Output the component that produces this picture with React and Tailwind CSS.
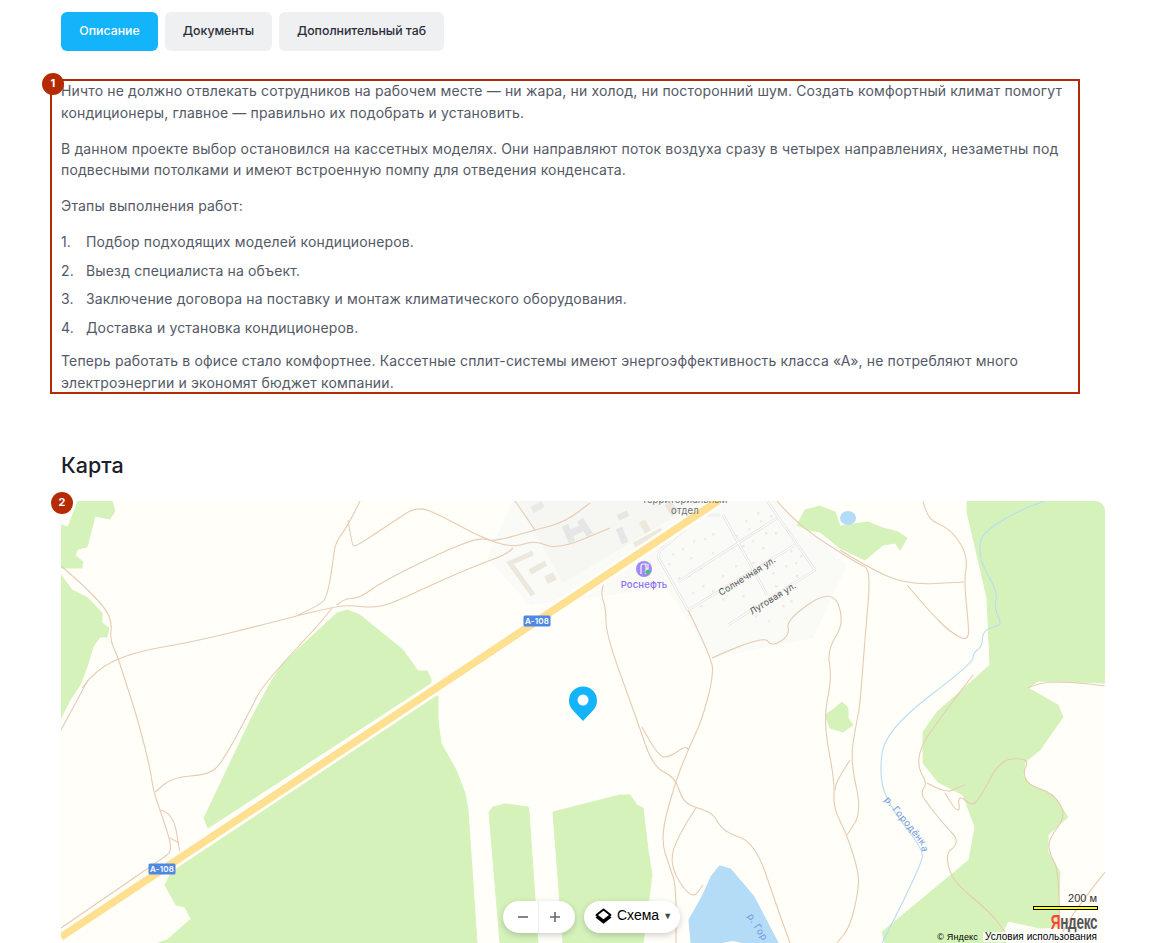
const GREEN = [
  "61,525 68,527 78,501 112,501 115,511 110,519 95,516 87,547 78,549 75,555 83,562 82,568 61,568",
  "61,575 72,590 88,598 102,613 102,623 109,628 107,637 100,637 93,647 87,667 80,685 70,700 61,718",
  "347,610 360,615 403,650 418,671 427,671 431,679 431,683 208,828 204,818 252,717 272,680 283,663 337,613",
  "438,696 427,698 175,865 165,885 176,905 185,907 191,919 167,940 158,943 477,943 468,810 465,793 456,770 441,743 438,720",
  "489,812 493,807 506,804 528,807 529,812 538,943 500,943",
  "553,812 620,795 630,795 637,805 643,808 648,850 652,875 643,943 563,943",
  "967,501 1105,501 1105,683 1038,681 1028,688 1058,705 1063,717 1040,750 1025,762 1023,775 1030,785 1053,795 1068,817 1048,835 1048,852 1060,872 1058,927 1040,928 1008,921 1003,932 1006,943 885,943 882,932 969,860 975,827 963,795 938,782 923,763 923,732 937,712 990,665 987,598 967,512",
  "797,525 805,510 820,506 835,512 840,526 868,522 883,528 898,532 907,538 900,550 895,543 883,545 865,560 840,548 820,532 808,530",
  "825,715 835,708 842,702 848,708 848,718 853,725 843,732 830,728",
];

const TRAILS = [
  "M61,566 L75,578 L90,592 L105,608 L112,622 L110,640 L117,655 L125,680 L137,717 L150,767 L153,790 L160,810 L170,840 L171,852 L163,858 L61,928",
  "M82,688 L95,670 L133,652 L193,642 L270,623 L300,615 L330,608 L347,605 L373,608 L393,603 L440,581 L480,564 L505,555 L513,548",
  "M298,615 L320,605 L327,597 L333,563 L335,543 L347,527 L360,501",
  "M337,605 L343,599 L360,598 L380,583 L440,553 L480,537 L493,542 L535,530 L565,522 L590,503",
  "M348,520 L352,545 L355,547 L393,522 L417,506 L440,515 L480,537 L513,548 L535,540 L557,550 L610,528",
  "M515,501 L535,530",
  "M332,608 L323,620 L283,663 L260,690 L252,707 L222,763 L208,775 L173,777 L155,792",
  "M160,810 L173,812 L180,853",
  "M170,838 L179,843",
  "M61,730 L88,680",
  "M605,580 L600,592 L606,608 L606,635 L637,720 L653,767 L675,777 L683,802 L697,808 L713,813 L723,832 L755,842 L777,907 L790,943",
  "M688,610 L712,658 L713,678 L702,720 L688,750 L676,780 L660,837 L670,868 L676,885 L676,943",
  "M642,727 L658,757 L670,757 L685,746 L689,750",
  "M696,808 L675,840 L670,868 L692,900 L703,885",
  "M712,658 L763,635 L772,647 L790,635 L786,620 L832,588 L845,622 L827,650 L832,678 L823,720 L835,783 L833,807 L847,835 L859,873 L858,893 L850,927 L837,943",
  "M777,501 L797,525 L860,565 L867,567 L870,582 L865,638 L860,705 L857,720 L850,760 L862,812 L847,835",
  "M850,760 L837,780 L835,790",
  "M840,550 L867,567 L907,585 L964,582",
  "M923,501 L927,520 L950,528 L968,555 L964,582 L968,618 L969,642 L950,632 L930,612 L907,585",
  "M973,675 L937,722 L920,748 L918,768 L927,783 L922,790 L922,797 L947,828 L957,838 L955,847 L947,852 L948,868 L957,885 L990,912 L1005,932",
  "M927,783 L945,793 L957,788 L965,785",
  "M945,793 L955,810 L960,810 L958,798 L963,798 L972,806 L980,798 L1000,760 L1023,758 L1028,763 L1023,772 L1028,785 L1053,793 L1067,815 L1048,840 L1050,855 L1058,868 L1060,927",
  "M1028,688 L1040,682 L1073,682 L1105,686",
  "M1105,872 L1073,912 L1057,943",
];

const RIVER = "M882,943 L923,863 L922,848 L890,807 L879,777 L885,730 L973,663 L973,653 L982,647 L983,630 L998,626 L1001,622 L994,607 L998,593 L982,565 L979,548 L983,532 L1020,510 L1045,501";

// Rounds the corners of a traced polyline so that tracks read as curves.
function smooth(d) {
  const pts = d.replace(/[ML]/g, " ").trim().split(/\s+/).map((p) => p.split(",").map(Number));
  let out = `M${pts[0][0]},${pts[0][1]}`;
  for (let i = 1; i < pts.length - 1; i++) {
    const [x, y] = pts[i];
    const [nx, ny] = pts[i + 1];
    out += ` Q${x},${y} ${(x + nx) / 2},${(y + ny) / 2}`;
  }
  const last = pts[pts.length - 1];
  return out + ` L${last[0]},${last[1]}`;
}

const BLOCKS = [
  { d: "M533,553 L510,563 L533,595", c: "#ece8de", w: 5 },
  { d: "M530,572 L546,563", c: "#ece8de", w: 6 },
  { d: "M546,580 L555,576", c: "#ece8de", w: 8 },
  { d: "M532,510 L543,504", c: "#e9e9e6", w: 7 },
  { d: "M565,525 L572,542 M580,520 L590,535 M569,534 L585,527", c: "#e6e6e6", w: 7 },
  { d: "M619,528 L625,543", c: "#e6e6e6", w: 7 },
  { d: "M618,518 L628,513", c: "#e6e6e6", w: 6 },
  { d: "M642,521 L648,532", c: "#ece8de", w: 7 },
  { d: "M634,545 L662,530", c: "#ece8de", w: 5 },
  { d: "M668,503 L675,514", c: "#ece8de", w: 8 },
];

const HOUSES = [
  [672,553],[682,548],[693,540],[704,538],[712,533],[668,563],[690,557],[700,567],[712,552],[688,575],[678,577],
  [735,535],[748,528],[760,520],[765,532],[752,540],[742,545],[757,512],[745,520],[770,515],[775,532],[762,547],
  [692,592],[702,585],[712,590],[722,575],[735,565],[745,575],[730,585],[752,562],[700,605],[742,595],[722,598],
  [790,550],[795,562],[785,565],[800,555],[772,572],[775,585],[796,575],[755,615],[768,620],[782,605],[790,600],
];

const STREETS = "M720,515 L703,515 L660,550 L658,557 L688,610 L795,545 M723,515 L767,595 M678,582 L777,518 M767,501 L815,570 L728,625";

function MapDrawing() {
  return (
    <svg viewBox="61 501 1044 442" className="block h-[442px] w-[1044px]">
      <rect x="61" y="501" width="1044" height="442" fill="#fffef8" />
      <polygon points="487,558 513,501 777,501 847,565 813,638 713,658 667,588 530,605" fill="#fafaf6" />
      <polygon points="517,501 700,501 563,583" fill="#f6f6f3" />
      {GREEN.map((p) => (
        <polygon key={p} points={p} fill="#d6f2bb" stroke="#d6f2bb" strokeWidth="1" strokeLinejoin="round" />
      ))}
      <ellipse cx="848" cy="518" rx="8" ry="7" fill="#b5dcf7" />
      <path d="M712,877 L720,867 L730,870 L753,897 L777,943 L692,943 L690,920 L703,897 Z" fill="#b5dcf7" stroke="#b5dcf7" strokeWidth="3" strokeLinejoin="round" />
      <path d="M722,943 L733,941 L742,943 Z" fill="#fffef8" />
      {BLOCKS.map((b) => (
        <path key={b.d} d={b.d} stroke={b.c} strokeWidth={b.w} fill="none" />
      ))}
      {HOUSES.map(([x, y]) => (
        <rect key={x + "-" + y} x={x} y={y} width="2.5" height="2.5" fill="#ebebe7" />
      ))}
      <path d={STREETS} stroke="#e2e2e0" strokeWidth="2.6" fill="none" strokeLinejoin="round" />
      <path d={STREETS} stroke="#ffffff" strokeWidth="1.2" fill="none" strokeLinejoin="round" />
      <path d={smooth(RIVER)} stroke="#b7dcf3" strokeWidth="1.1" fill="none" />
      {TRAILS.map((d) => (
        <path key={d} d={smooth(d)} stroke="#e6cbb3" strokeWidth="1.1" fill="none" />
      ))}
      <path d="M61,937 L718,501" stroke="#fffef8" strokeWidth="13" fill="none" />
      <path d="M61,937 L718,501" stroke="#ffdf90" strokeWidth="7.5" fill="none" />
      <g fontFamily="'Inter', sans-serif">
        <text x="685" y="503" textAnchor="middle" fontSize="9.5" fill="#6f6f6f">территориальный</text>
        <text x="685" y="514" textAnchor="middle" fontSize="9.5" fill="#6f6f6f">отдел</text>
        <text x="644" y="588" textAnchor="middle" fontSize="9.5" fontWeight="500" fill="#8a70f0">Роснефть</text>
        <text transform="translate(721,596) rotate(-32)" fontSize="9" fill="#555555">Солнечная ул.</text>
        <text transform="translate(752,615) rotate(-32)" fontSize="9" fill="#555555">Луговая ул.</text>
        <path id="river-label" d="M884,800 L904,824 L921,845 L923,860" fill="none" />
        <text fontSize="9.5" fill="#6d97dc" letterSpacing="0.4">
          <textPath href="#river-label">р. Городёнка</textPath>
        </text>
        <text transform="translate(747,916) rotate(58)" fontSize="9.5" fill="#6d97dc" letterSpacing="0.4">р. Гор</text>
      </g>
      <circle cx="644" cy="569" r="8" fill="#a08af2" />
      <path d="M641,574 L641,566 Q641,564 643,564 L646,564 L646,574 M646,569 L648,569 L648,564" stroke="#ffffff" strokeWidth="1.1" fill="none" />
      <circle cx="647.5" cy="572" r="2" fill="#31cf4c" />
      {[[537,621],[162,869]].map(([x, y]) => (
        <g key={x}>
          <rect x={x - 13.5} y={y - 5.5} width="27" height="11" rx="1.5" fill="#4f88e3" />
          <text x={x} y={y + 3} textAnchor="middle" fontSize="8" fontWeight="600" fontFamily="'Inter', sans-serif" fill="#ffffff">А-108</text>
        </g>
      ))}
      <path d="M583,721 L572.8,710.2 A14,14 0 1 1 593.2,710.2 Z" fill="#14b4fb" />
      <circle cx="583" cy="700" r="5.5" fill="#ffffff" />
    </svg>
  );
}

function Badge({ n, className }) {
  return (
    <span className={"absolute flex h-[22px] w-[22px] items-center justify-center rounded-full bg-[#b52a00] text-[11px] font-bold text-white " + className}>
      {n}
    </span>
  );
}

export default function App() {
  return (
    <div className="h-[943px] overflow-hidden bg-white px-[61px] pt-3 font-['Inter',sans-serif] text-[14px] leading-[21.7px] tracking-[0.15px] text-[#545966]">
      <div className="flex gap-[7px] text-[12.3px] font-[450] tracking-normal text-[#2b2e38]">
        <button className="flex h-[39px] w-[97px] items-center justify-center rounded-md bg-[#14b4fb] pb-[2px] text-white">Описание</button>
        <button className="flex h-[39px] w-[107px] items-center justify-center rounded-md bg-[#eff0f2] pb-[2px]">Документы</button>
        <button className="flex h-[39px] w-[165px] items-center justify-center rounded-md bg-[#eff0f2] pb-[2px]">Дополнительный таб</button>
      </div>

      <div className="relative mt-[29px] w-[1008px]">
        <p>Ничто не должно отвлекать сотрудников на рабочем месте — ни жара, ни холод, ни посторонний шум. Создать комфортный климат помогут кондиционеры, главное — правильно их подобрать и установить.</p>
        <p className="mt-[14.3px]">В данном проекте выбор остановился на кассетных моделях. Они направляют поток воздуха сразу в четырех направлениях, незаметны под подвесными потолками и имеют встроенную помпу для отведения конденсата.</p>
        <p className="mt-[14.3px]">Этапы выполнения работ:</p>
        <ol className="mt-[14.3px] flex flex-col gap-[6.8px]">
          <li className="flex"><span className="w-[25px]">1.</span>Подбор подходящих моделей кондиционеров.</li>
          <li className="flex"><span className="w-[25px]">2.</span>Выезд специалиста на объект.</li>
          <li className="flex"><span className="w-[25px]">3.</span>Заключение договора на поставку и монтаж климатического оборудования.</li>
          <li className="flex"><span className="w-[25px]">4.</span>Доставка и установка кондиционеров.</li>
        </ol>
        <p className="mt-[11.6px]">Теперь работать в офисе стало комфортнее. Кассетные сплит-системы имеют энергоэффективность класса «А», не потребляют много электроэнергии и экономят бюджет компании.</p>
        <div className="pointer-events-none absolute -top-px bottom-0 left-[-11px] w-[1030px] border-2 border-[#b52a00]" />
        <Badge n="1" className="-left-[19px] -top-[7px]" />
      </div>

      <h2 className="mt-[56px] text-[21.5px] font-medium leading-[30px] tracking-normal text-[#1c1f2a]">Карта</h2>

      <div className="relative mt-[21px] h-[442px] w-[1044px]">
        <div className="h-full w-full overflow-hidden rounded-t-[10px]">
          <MapDrawing />
        </div>
        <Badge n="2" className="-left-[10px] -top-[9px]" />

        <div className="absolute left-[442px] top-[400px] flex h-8 w-[72px] items-center rounded-full bg-white shadow-[0_2px_6px_rgba(0,0,0,0.2)]">
          <span className="flex h-full w-9 items-center justify-center border-r border-[#eee] pl-1">
            <svg width="12" height="12" viewBox="0 0 12 12"><path d="M1 6 H11" stroke="#666" strokeWidth="1.6" /></svg>
          </span>
          <span className="flex h-full w-9 items-center justify-center pr-1">
            <svg width="12" height="12" viewBox="0 0 12 12"><path d="M1 6 H11 M6 1 V11" stroke="#666" strokeWidth="1.6" /></svg>
          </span>
        </div>

        <div className="absolute left-[523px] top-[400px] flex h-8 w-[96px] items-center rounded-full bg-white pl-[11px] font-['Liberation_Sans',sans-serif] text-[14px] tracking-normal text-black shadow-[0_2px_6px_rgba(0,0,0,0.2)]">
          <svg width="17" height="17" viewBox="0 0 17 17" className="mr-[5px]">
            <path d="M0.5 9.5 L8.5 15.8 L16.5 9.5 L14 7.5 L8.5 11.8 L3 7.5 Z" fill="#000" />
            <path d="M8.5 1.5 L15.5 7 L8.5 12.5 L1.5 7 Z" fill="#fff" stroke="#000" strokeWidth="2" strokeLinejoin="round" />
          </svg>
          <span className="pb-[2px]">Схема</span>
          <span className="ml-[4px] text-[9px] text-[#444]">▼</span>
        </div>

        <div className="absolute right-[7px] top-[391px] flex flex-col items-end font-['Liberation_Sans',sans-serif] tracking-normal">
          <span className="pr-px text-[11px] leading-[12px] text-[#333]">200 м</span>
          <span className="mt-[2px] h-[4px] w-[65px] border border-black bg-[#ffff00]" />
        </div>
        <div className="absolute right-[8px] top-[410px] origin-right scale-x-[0.68] font-['Liberation_Sans',sans-serif] text-[20px] font-bold leading-[22px] tracking-[-0.5px] text-[#555]">
          <span className="text-[#f43]">Я</span>ндекс
        </div>
        <div className="absolute bottom-0 right-[8px] flex h-[11px] items-center font-['Liberation_Sans',sans-serif] text-[10px] leading-[10px] text-black">
          <span className="mr-[5px] text-[9px]">© Яндекс</span>
          <span className="bg-white/80 pl-[2px] tracking-[0.05px]">Условия использования</span>
        </div>
      </div>
    </div>
  );
}
